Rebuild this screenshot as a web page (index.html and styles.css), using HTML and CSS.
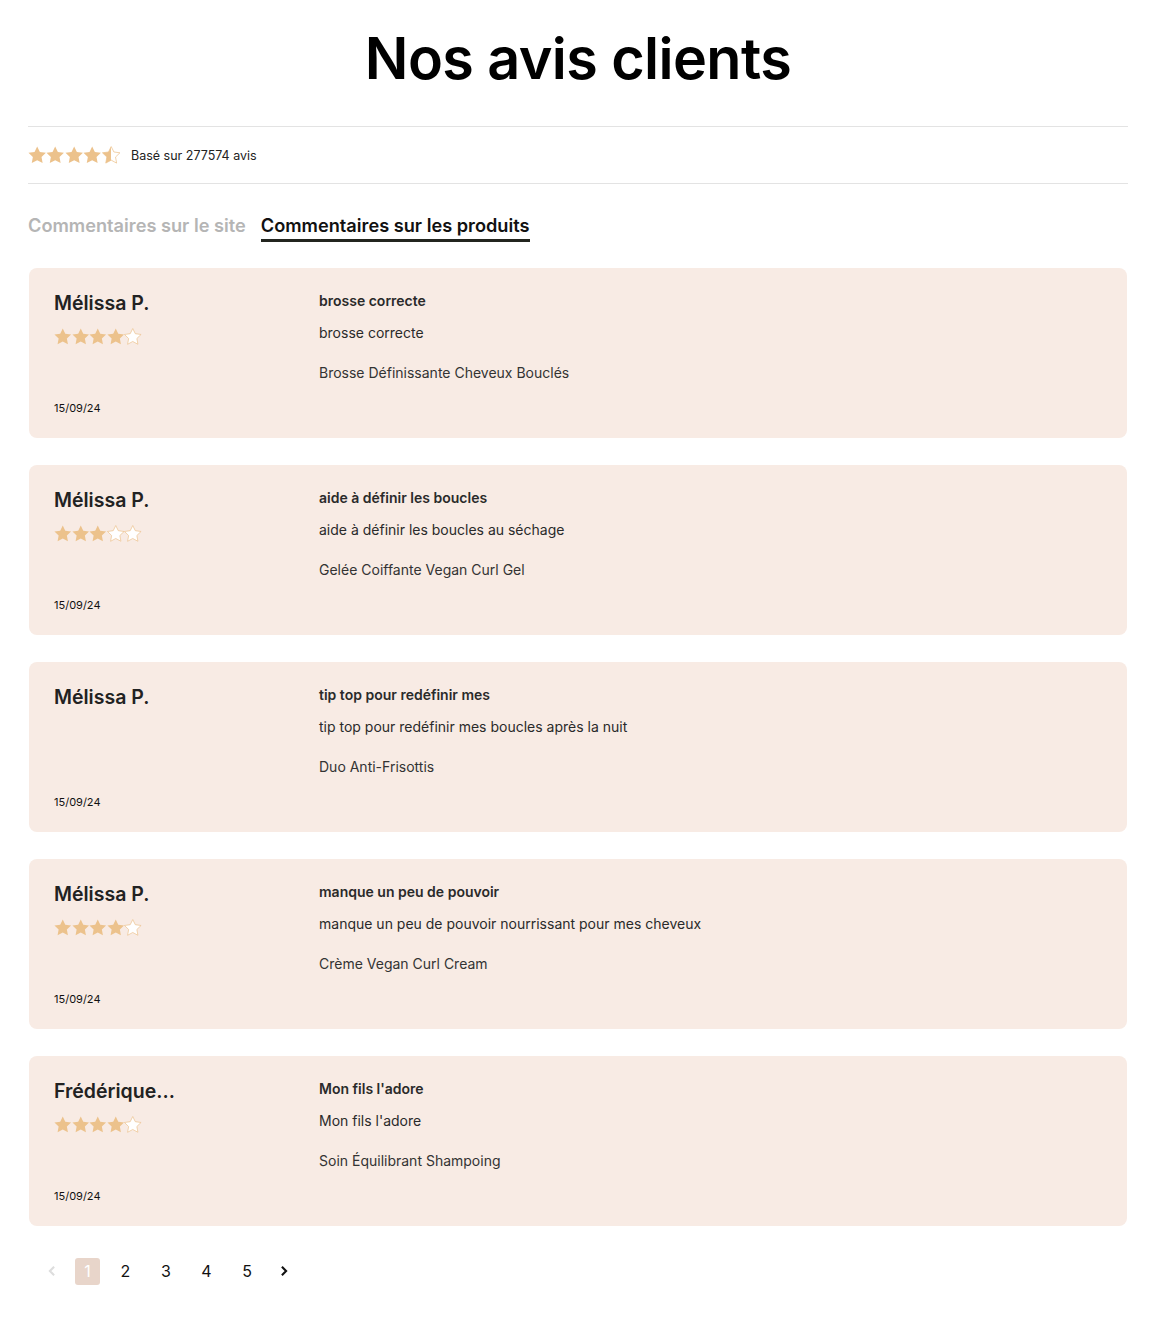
FILE: index.html
```html
<!DOCTYPE html>
<html lang="fr">
<head>
<meta charset="utf-8">
<title>Nos avis clients</title>
<link rel="stylesheet" href="styles.css">
</head>
<body>
<svg width="0" height="0" class="defs" aria-hidden="true">
  <defs>
    <path id="star" d="M10 0.6L12.9 6.5 19.5 7.4 14.7 12 15.9 18.6 10 15.4 4.1 18.6 5.3 12 0.5 7.4 7.1 6.5z"/>
    <linearGradient id="half"><stop offset="50%" stop-color="#ecc28c"/><stop offset="50%" stop-color="#fff"/></linearGradient>
  </defs>
</svg>
<main class="page">
  <h1 class="title">Nos avis clients</h1>
  <div class="summary">
    <div class="stars stars-lg">
      <svg viewBox="0 0 20 20"><use href="#star" class="full"/></svg>
      <svg viewBox="0 0 20 20"><use href="#star" class="full"/></svg>
      <svg viewBox="0 0 20 20"><use href="#star" class="full"/></svg>
      <svg viewBox="0 0 20 20"><use href="#star" class="full"/></svg>
      <svg viewBox="0 0 20 20"><use href="#star" class="halfs"/></svg>
    </div>
    <span class="summary-text">Basé sur 277574 avis</span>
  </div>
  <nav class="tabs">
    <span class="tab">Commentaires sur le site</span>
    <span class="tab active">Commentaires sur les produits</span>
  </nav>

  <section class="reviews">
    <article class="card">
      <div class="left">
        <div class="name">Mélissa P.</div>
        <div class="stars">
          <svg viewBox="0 0 20 20"><use href="#star" class="full"/></svg>
          <svg viewBox="0 0 20 20"><use href="#star" class="full"/></svg>
          <svg viewBox="0 0 20 20"><use href="#star" class="full"/></svg>
          <svg viewBox="0 0 20 20"><use href="#star" class="full"/></svg>
          <svg viewBox="0 0 20 20"><use href="#star" class="empty"/></svg>
        </div>
        <div class="date">15/09/24</div>
      </div>
      <div class="right">
        <div class="r-title">brosse correcte</div>
        <div class="r-body">brosse correcte</div>
        <div class="r-product">Brosse Définissante Cheveux Bouclés</div>
      </div>
    </article>

    <article class="card">
      <div class="left">
        <div class="name">Mélissa P.</div>
        <div class="stars">
          <svg viewBox="0 0 20 20"><use href="#star" class="full"/></svg>
          <svg viewBox="0 0 20 20"><use href="#star" class="full"/></svg>
          <svg viewBox="0 0 20 20"><use href="#star" class="full"/></svg>
          <svg viewBox="0 0 20 20"><use href="#star" class="empty"/></svg>
          <svg viewBox="0 0 20 20"><use href="#star" class="empty"/></svg>
        </div>
        <div class="date">15/09/24</div>
      </div>
      <div class="right">
        <div class="r-title">aide à définir les boucles</div>
        <div class="r-body">aide à définir les boucles au séchage</div>
        <div class="r-product">Gelée Coiffante Vegan Curl Gel</div>
      </div>
    </article>

    <article class="card">
      <div class="left">
        <div class="name">Mélissa P.</div>
        <div class="stars"></div>
        <div class="date">15/09/24</div>
      </div>
      <div class="right">
        <div class="r-title">tip top pour redéfinir mes</div>
        <div class="r-body">tip top pour redéfinir mes boucles après la nuit</div>
        <div class="r-product">Duo Anti-Frisottis</div>
      </div>
    </article>

    <article class="card">
      <div class="left">
        <div class="name">Mélissa P.</div>
        <div class="stars">
          <svg viewBox="0 0 20 20"><use href="#star" class="full"/></svg>
          <svg viewBox="0 0 20 20"><use href="#star" class="full"/></svg>
          <svg viewBox="0 0 20 20"><use href="#star" class="full"/></svg>
          <svg viewBox="0 0 20 20"><use href="#star" class="full"/></svg>
          <svg viewBox="0 0 20 20"><use href="#star" class="empty"/></svg>
        </div>
        <div class="date">15/09/24</div>
      </div>
      <div class="right">
        <div class="r-title">manque un peu de pouvoir</div>
        <div class="r-body">manque un peu de pouvoir nourrissant pour mes cheveux</div>
        <div class="r-product">Crème Vegan Curl Cream</div>
      </div>
    </article>

    <article class="card">
      <div class="left">
        <div class="name">Frédérique...</div>
        <div class="stars">
          <svg viewBox="0 0 20 20"><use href="#star" class="full"/></svg>
          <svg viewBox="0 0 20 20"><use href="#star" class="full"/></svg>
          <svg viewBox="0 0 20 20"><use href="#star" class="full"/></svg>
          <svg viewBox="0 0 20 20"><use href="#star" class="full"/></svg>
          <svg viewBox="0 0 20 20"><use href="#star" class="empty"/></svg>
        </div>
        <div class="date">15/09/24</div>
      </div>
      <div class="right">
        <div class="r-title">Mon fils l'adore</div>
        <div class="r-body">Mon fils l'adore</div>
        <div class="r-product">Soin Équilibrant Shampoing</div>
      </div>
    </article>
  </section>

  <nav class="pager">
    <span class="pg-arrow disabled"><svg viewBox="0 0 10 10"><path d="M6.5 2L3.5 5l3 3"/></svg></span>
    <span class="pg current">1</span>
    <span class="pg">2</span>
    <span class="pg">3</span>
    <span class="pg">4</span>
    <span class="pg">5</span>
    <span class="pg-arrow"><svg viewBox="0 0 10 10"><path d="M3.5 2l3 3-3 3"/></svg></span>
  </nav>
</main>
</body>
</html>
```

FILE: styles.css
```css
* { box-sizing: border-box; }
body {
  margin: 0;
  background: #fff;
  color: #222;
  font-family: Inter, "Liberation Sans", Arial, sans-serif;
}
.defs { position: absolute; }
.page {
  width: 1100px;
  margin: 0 0 0 28px;
  padding-bottom: 38px;
}
.title {
  margin: 0;
  padding-top: 23px;
  height: 127px;
  text-align: center;
  font-size: 57.5px;
  font-weight: 600;
  letter-spacing: -0.6px;
  line-height: 70px;
  color: #000;
  border-bottom: 1px solid #e3e3e3;
}
.summary {
  height: 57px;
  display: flex;
  align-items: center;
  gap: 11px;
  border-bottom: 1px solid #e3e3e3;
}
.stars { display: flex; gap: 0; height: 17px; }
.stars svg { width: 17.5px; height: 17.5px; }
.stars-lg svg { width: 18.4px; height: 18.4px; }
.stars-lg { height: 18.4px; }
.full { fill: #ecc28c; }
.empty { fill: #fff; stroke: #ecc28c; stroke-width: 0.8; }
.halfs { fill: url(#half); stroke: #ecc28c; stroke-width: 0.8; }
.summary-text { font-size: 12.5px; color: #222; }

.tabs {
  display: flex;
  gap: 15px;
  padding-top: 30px;
  height: 84px;
}
.tab {
  font-size: 18.2px;
  font-weight: 600;
  color: #b5b5b5;
  height: 28px;
  line-height: 22px;
}
.tab.active {
  color: #111;
  border-bottom: 3px solid #23251f;
}

.reviews { display: flex; flex-direction: column; gap: 27px; }
.card {
  margin: 0 1px;
  height: 170px;
  background: #f8ebe4;
  border-radius: 8px;
  display: grid;
  grid-template-columns: 265px 1fr;
  padding: 22px 25px 0;
}
.left { display: flex; flex-direction: column; }
.name { font-size: 19.5px; font-weight: 600; color: #222; line-height: 26px; }
.left .stars { margin-top: 12px; height: 18px; }
.date { font-size: 11px; color: #111; margin-top: 55px; line-height: 14px; }
.right { font-size: 14px; color: #2a2a2a; padding-top: 1px; }
.r-title { font-weight: 600; line-height: 20px; }
.r-body { margin-top: 12px; line-height: 20px; }
.r-product { margin-top: 20px; line-height: 20px; color: #333; }

.pager {
  display: flex;
  align-items: center;
  margin-top: 31px;
  padding-left: 15px;
  height: 28px;
}
.pg {
  width: 25px;
  height: 27px;
  display: flex;
  align-items: center;
  justify-content: center;
  font-size: 16px;
  color: #111;
  margin-right: 15.5px;
  border-radius: 3px;
}
.pg.current { background: #e8d5ca; color: #fff; margin-right: 13px; }
.pg-arrow { width: 18px; height: 18px; display: flex; align-items: center; justify-content: center; margin-right: 14px; }
.pg-arrow svg { width: 14px; height: 14px; fill: none; stroke: #111; stroke-width: 1.5; }
.pg-arrow.disabled svg { stroke: #ddd; }
```
